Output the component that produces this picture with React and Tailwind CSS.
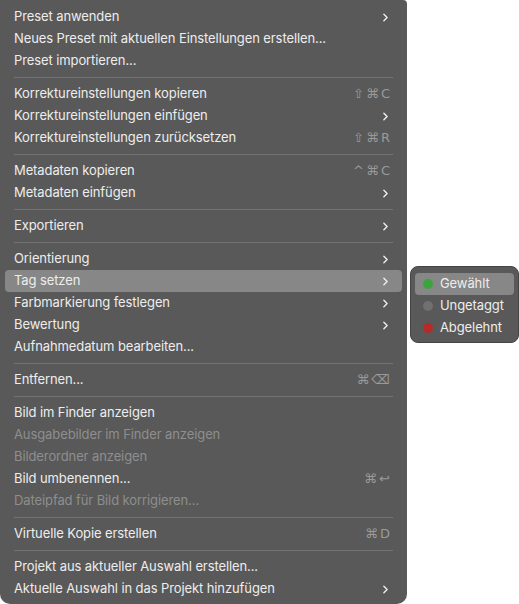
import { ChevronRight } from "lucide-react";

const sections = [
    [
        { label: "Preset anwenden", sub: true },
        { label: "Neues Preset mit aktuellen Einstellungen erstellen..." },
        { label: "Preset importieren..." },
    ],
    [
        { label: "Korrektureinstellungen kopieren", keys: "⇧⌘C" },
        { label: "Korrektureinstellungen einfügen", sub: true },
        { label: "Korrektureinstellungen zurücksetzen", keys: "⇧⌘R" },
    ],
    [
        { label: "Metadaten kopieren", keys: "^⌘C" },
        { label: "Metadaten einfügen", sub: true },
    ],
    [{ label: "Exportieren", sub: true }],
    [
        { label: "Orientierung", sub: true },
        { label: "Tag setzen", sub: true, active: true },
        { label: "Farbmarkierung festlegen", sub: true },
        { label: "Bewertung", sub: true },
        { label: "Aufnahmedatum bearbeiten..." },
    ],
    [{ label: "Entfernen...", keys: "⌘⌫" }],
    [
        { label: "Bild im Finder anzeigen" },
        { label: "Ausgabebilder im Finder anzeigen", disabled: true },
        { label: "Bilderordner anzeigen", disabled: true },
        { label: "Bild umbenennen...", keys: "⌘↩" },
        { label: "Dateipfad für Bild korrigieren...", disabled: true },
    ],
    [{ label: "Virtuelle Kopie erstellen", keys: "⌘D" }],
    [
        { label: "Projekt aus aktueller Auswahl erstellen..." },
        { label: "Aktuelle Auswahl in das Projekt hinzufügen", sub: true },
    ],
];

const tags = [
    { label: "Gewählt", dot: "bg-[#3aa53a]", active: true },
    { label: "Ungetaggt", dot: "bg-[#707070]" },
    { label: "Abgelehnt", dot: "bg-[#b82a28]" },
];

const MenuRow = ({ item }) => (
    <div
        className={
            "mx-[5px] h-[22px] pl-[9px] pr-[12px] flex items-center justify-between rounded-[4px] " +
            (item.active ? "bg-[#878787]" : "")
        }
    >
        <span className={item.disabled ? "text-[#8e8e8e]" : "text-[#ededed]"}>{item.label}</span>
        {item.sub && <ChevronRight size={13} strokeWidth={2.6} className="text-[#ededed] mr-[-2px]" />}
        {item.keys && (
            <span className="text-[#9a9a9a] tracking-[2px] mr-[-2px] font-['DejaVu_Sans',sans-serif] text-[13px]">
                {item.keys}
            </span>
        )}
    </div>
);

const App = () => {
    return (
        <div className="flex bg-white w-[519px] h-[604px] overflow-hidden font-['Inter','Liberation_Sans',sans-serif] text-[13px] tracking-[-0.1px]">
            {/* Main context menu */}
            <div className="w-[407px] h-[604px] bg-[#595959] rounded-b-[10px] rounded-tr-[4px] pt-[6px] pb-[4px] flex flex-col">
                {sections.map((section, i) => (
                    <div key={i}>
                        {i > 0 && (
                            <div className="h-[11px] flex items-center px-[14px]">
                                <div className="h-px w-full bg-[#737373]" />
                            </div>
                        )}
                        {section.map((item) => (
                            <MenuRow key={item.label} item={item} />
                        ))}
                    </div>
                ))}
            </div>

            {/* Tag submenu */}
            <div className="ml-[3px] mt-[266px] w-[109px] h-[77px] bg-[#595959] border border-[#454545] rounded-[8px] pt-[6px] flex flex-col">
                {tags.map((t) => (
                    <div
                        key={t.label}
                        className={
                            "mx-[4px] h-[22px] pl-[8px] flex items-center gap-[7px] rounded-[4px] " +
                            (t.active ? "bg-[#878787]" : "")
                        }
                    >
                        <span className={"w-[10px] h-[10px] rounded-full " + t.dot} />
                        <span className="text-[#ededed]">{t.label}</span>
                    </div>
                ))}
            </div>
        </div>
    );
};

export default App;
